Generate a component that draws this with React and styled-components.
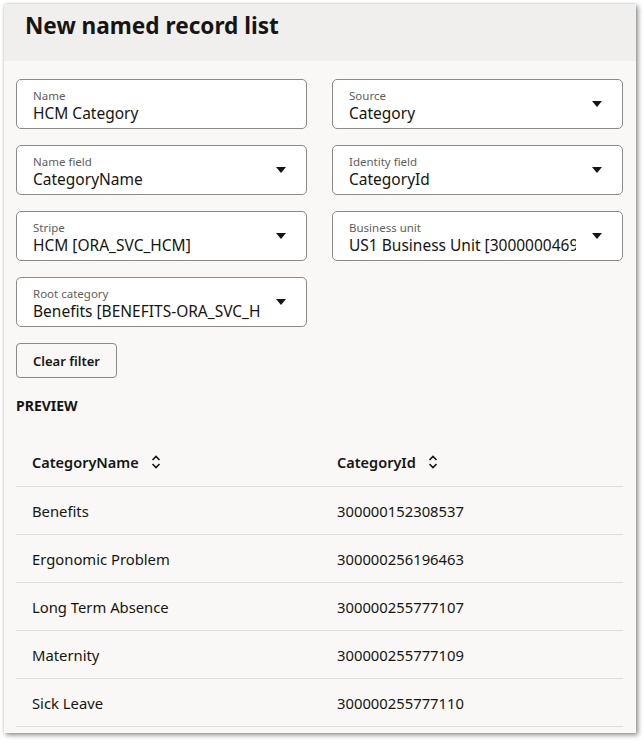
import React from 'react';
import styled, { createGlobalStyle } from 'styled-components';

const GlobalStyle = createGlobalStyle`
  html, body {
    margin: 0;
    padding: 0;
    background: #ffffff;
    font-family: "Noto Sans", "Segoe UI", sans-serif;
    color: #161513;
  }
`;

const Page = styled.div`
  padding: 4px 8px 8px 4px;
`;

const Panel = styled.div`
  width: 632px;
  background: #f9f8f6;
  box-shadow: 2px 2px 5px rgba(0, 0, 0, 0.45), 0 0 2px rgba(0, 0, 0, 0.15);
  padding-bottom: 6px;
`;

const Header = styled.div`
  background: #f0efed;
  height: 57px;
  padding: 8px 0 0 21px;
  box-sizing: border-box;
`;

const Title = styled.h1`
  margin: 0;
  font-size: 22.6px;
  font-weight: 700;
  line-height: 27px;
`;

const Body = styled.div`
  padding: 18px 12px 0 12px;
`;

const Grid = styled.div`
  display: grid;
  grid-template-columns: 291px 291px;
  column-gap: 25px;
  row-gap: 16px;
`;

const Field = styled.div`
  position: relative;
  height: 50px;
  box-sizing: border-box;
  background: #ffffff;
  border: 1px solid #8b8a88;
  border-radius: 5px;
  padding: 9px ${(p) => (p.$select ? '46px' : '16px')} 0 16px;
  overflow: hidden;
`;

const Label = styled.div`
  font-size: 11.5px;
  line-height: 14px;
  color: #5f5e5b;
`;

const Value = styled.div`
  font-size: 15.5px;
  line-height: 20px;
  white-space: nowrap;
  overflow: hidden;
`;

const Caret = styled.svg`
  position: absolute;
  right: 20px;
  top: 21px;
`;

const Button = styled.button`
  margin-top: 16px;
  height: 35px;
  padding: 0 16px;
  border: 1px solid #8b8a88;
  border-radius: 4px;
  background: #f9f8f6;
  font-family: inherit;
  font-size: 13px;
  font-weight: 600;
  color: #161513;
`;

const Section = styled.div`
  margin-top: 19px;
  font-size: 14px;
  font-weight: 700;
  line-height: 18px;
`;

const Table = styled.table`
  margin-top: 23px;
  width: 607px;
  border-collapse: collapse;
  table-layout: fixed;
`;

const Th = styled.th`
  text-align: left;
  font-size: 14.5px;
  font-weight: 600;
  height: 48px;
  padding: 0 16px;
  border-bottom: 1px solid #dedcd9;
  width: ${(p) => p.$w || 'auto'};
`;

const Td = styled.td`
  font-size: 14.8px;
  height: 47px;
  padding: 0 16px;
  border-bottom: 1px solid #dedcd9;
`;

const HeadInner = styled.span`
  display: inline-flex;
  align-items: center;
  gap: 12px;
`;

const SortIcon = () => (
  <svg width="10" height="14" viewBox="0 0 10 14">
    <path d="M1.5 5 L5 1.5 L8.5 5 M1.5 9 L5 12.5 L8.5 9" fill="none" stroke="#161513" strokeWidth="1.6" />
  </svg>
);

const fields = [
  { label: 'Name', value: 'HCM Category' },
  { label: 'Source', value: 'Category', select: true },
  { label: 'Name field', value: 'CategoryName', select: true },
  { label: 'Identity field', value: 'CategoryId', select: true },
  { label: 'Stripe', value: 'HCM [ORA_SVC_HCM]', select: true },
  { label: 'Business unit', value: 'US1 Business Unit [300000046987012]', select: true },
  { label: 'Root category', value: 'Benefits [BENEFITS-ORA_SVC_HCM]', select: true },
];

const rows = [
  ['Benefits', '300000152308537'],
  ['Ergonomic Problem', '300000256196463'],
  ['Long Term Absence', '300000255777107'],
  ['Maternity', '300000255777109'],
  ['Sick Leave', '300000255777110'],
];

export default function App() {
  return (
    <Page>
      <GlobalStyle />
      <Panel>
        <Header>
          <Title>New named record list</Title>
        </Header>
        <Body>
          <Grid>
            {fields.map((f) => (
              <Field key={f.label} $select={f.select}>
                <Label>{f.label}</Label>
                <Value>{f.value}</Value>
                {f.select && (
                  <Caret width="10" height="6" viewBox="0 0 10 6">
                    <path d="M0 0 H10 L5 6 Z" fill="#161513" />
                  </Caret>
                )}
              </Field>
            ))}
          </Grid>
          <Button>Clear filter</Button>
          <Section>PREVIEW</Section>
          <Table>
            <thead>
              <tr>
                <Th $w="273px">
                  <HeadInner>CategoryName <SortIcon /></HeadInner>
                </Th>
                <Th>
                  <HeadInner>CategoryId <SortIcon /></HeadInner>
                </Th>
              </tr>
            </thead>
            <tbody>
              {rows.map((r) => (
                <tr key={r[1]}>
                  <Td>{r[0]}</Td>
                  <Td>{r[1]}</Td>
                </tr>
              ))}
            </tbody>
          </Table>
        </Body>
      </Panel>
    </Page>
  );
}
